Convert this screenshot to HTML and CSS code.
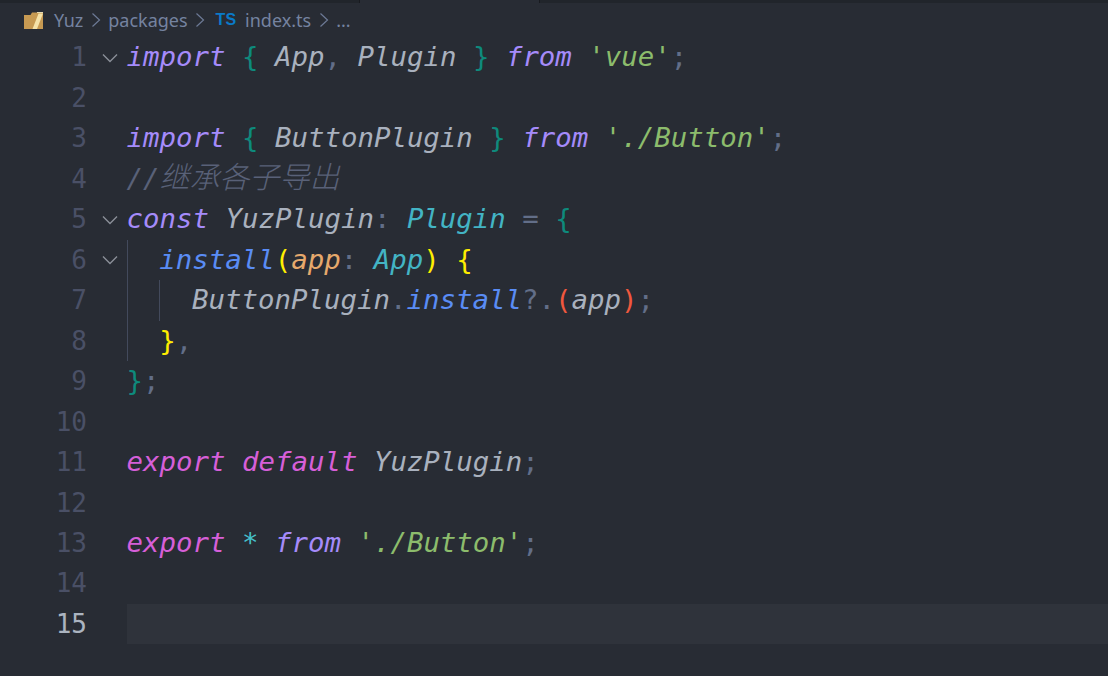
FILE: index.html
```html
<!DOCTYPE html>
<html lang="en">
<head>
<meta charset="utf-8">
<title>index.ts</title>
<link rel="stylesheet" href="styles.css">
</head>
<body>
<div class="tabstrip"><div class="tab-gap"></div><div class="tab-gap tab-active"></div><div class="tab-gap tab-rest"></div></div>
<nav class="crumbs">
  <svg class="folder" width="22" height="20" viewBox="0 0 22 20"><path d="M1 5h6.500L9 2.500h11V19H1z" fill="#c79a52"/><path d="M15.500 3.500H20L14 19H9.500z" fill="#f5e2a8"/><path d="M14 2.500h6" stroke="#e6d9b0" stroke-width="1"/></svg>
  <span class="crumb">Yuz</span>
  <svg class="sep" width="10" height="16" viewBox="0 0 10 16"><path d="M1.500 1.500l7 6.500-7 6.500" fill="none" stroke="#6d7a96" stroke-width="1.200"/></svg>
  <span class="crumb">packages</span>
  <svg class="sep" width="10" height="16" viewBox="0 0 10 16"><path d="M1.500 1.500l7 6.500-7 6.500" fill="none" stroke="#6d7a96" stroke-width="1.200"/></svg>
  <span class="ts">TS</span>
  <span class="crumb">index.ts</span>
  <svg class="sep" width="10" height="16" viewBox="0 0 10 16"><path d="M1.500 1.500l7 6.500-7 6.500" fill="none" stroke="#6d7a96" stroke-width="1.200"/></svg>
  <span class="crumb">...</span>
</nav>
<main class="editor">
  <div class="line"><span class="num">1</span><span class="fold"><svg width="16" height="10" viewBox="0 0 16 10"><path d="M1 1.500l7 7 7-7" fill="none" stroke="#8a8f98" stroke-width="1.400"/></svg></span><code class="code"><i class="kw">import</i> <i class="teal">{</i> <i>App</i><i class="pun">,</i> <i>Plugin</i> <i class="teal">}</i> <i class="kw">from</i> <i class="str">'vue'</i><i class="pun">;</i></code></div>
  <div class="line"><span class="num">2</span><span class="fold"></span><code class="code"></code></div>
  <div class="line"><span class="num">3</span><span class="fold"></span><code class="code"><i class="kw">import</i> <i class="teal">{</i> <i>ButtonPlugin</i> <i class="teal">}</i> <i class="kw">from</i> <i class="str">'./Button'</i><i class="pun">;</i></code></div>
  <div class="line"><span class="num">4</span><span class="fold"></span><code class="code"><i class="cmt">//<span class="cjk">继承各子导出</span></i></code></div>
  <div class="line"><span class="num">5</span><span class="fold"><svg width="16" height="10" viewBox="0 0 16 10"><path d="M1 1.500l7 7 7-7" fill="none" stroke="#8a8f98" stroke-width="1.400"/></svg></span><code class="code"><i class="kw">const</i> <i>YuzPlugin</i><i class="pun">:</i> <i class="type">Plugin</i> <i class="pun">=</i> <i class="teal">{</i></code></div>
  <div class="line"><span class="num">6</span><span class="fold"><svg width="16" height="10" viewBox="0 0 16 10"><path d="M1 1.500l7 7 7-7" fill="none" stroke="#8a8f98" stroke-width="1.400"/></svg></span><span class="guide"></span><code class="code"><i class="fn">install</i><i class="yel">(</i><i class="param">app</i><i class="pun">:</i> <i class="type">App</i><i class="yel">)</i> <i class="yel">{</i></code></div>
  <div class="line"><span class="num">7</span><span class="fold"></span><span class="guide"></span><span class="guide"></span><code class="code"><i>ButtonPlugin</i><i class="pun">.</i><i class="fn">install</i><i class="pun">?.</i><i class="red">(</i><i>app</i><i class="red">)</i><i class="pun">;</i></code></div>
  <div class="line"><span class="num">8</span><span class="fold"></span><span class="guide"></span><code class="code"><i class="yel">}</i><i class="pun">,</i></code></div>
  <div class="line"><span class="num">9</span><span class="fold"></span><code class="code"><i class="teal">}</i><i class="pun">;</i></code></div>
  <div class="line"><span class="num">10</span><span class="fold"></span><code class="code"></code></div>
  <div class="line"><span class="num">11</span><span class="fold"></span><code class="code"><i class="exp">export</i> <i class="exp">default</i> <i>YuzPlugin</i><i class="pun">;</i></code></div>
  <div class="line"><span class="num">12</span><span class="fold"></span><code class="code"></code></div>
  <div class="line"><span class="num">13</span><span class="fold"></span><code class="code"><i class="exp">export</i> <i class="star">*</i> <i class="kw">from</i> <i class="str">'./Button'</i><i class="pun">;</i></code></div>
  <div class="line"><span class="num">14</span><span class="fold"></span><code class="code"></code></div>
  <div class="line current"><span class="num">15</span><span class="fold"></span><code class="code"></code></div>
</main>
</body>
</html>
```
FILE: styles.css
```css
html, body { margin: 0; padding: 0; }
body {
  width: 1108px;
  height: 676px;
  overflow: hidden;
  background: #282c34;
  font-family: "Noto Sans", sans-serif;
}
.tabstrip { display: flex; height: 3px; background: #21252b; }
.tab-gap { width: 360px; border-right: 1px solid #181a1f; box-sizing: border-box; }
.tab-active { width: 180px; background: #282c34; }
.tab-rest { flex: 1; border-right: 0; }

.crumbs {
  display: flex;
  align-items: center;
  height: 34.400px;
  padding-left: 23px;
  color: #7583a0;
  font-size: 18px;
}
.folder { margin-right: 9px; }
.sep { margin: 0 7.500px; }
.ts {
  color: #0a7ac8;
  font-family: "Liberation Sans", sans-serif;
  font-weight: 700;
  font-size: 16px;
  margin: 0 9px 0 3px;
}

.editor {
  font-family: "DejaVu Sans Mono", monospace;
  font-size: 27.400px;
}
.line {
  display: flex;
  align-items: stretch;
  height: 40.470px;
  line-height: 40.470px;
}
.num {
  width: 87px;
  flex: none;
  text-align: right;
  color: #4a5066;
  font-size: 26px;
}
.fold {
  width: 39.500px;
  flex: none;
  box-sizing: border-box;
  padding-left: 15px;
  display: flex;
  align-items: center;
}
.guide {
  width: 32.800px;
  flex: none;
  box-sizing: border-box;
  border-left: 1px solid #434a5c;
}
.code {
  font: inherit;
  white-space: pre;
  color: #a9b1be;
  flex: 1;
}
.code i { font-style: italic; }
.code .pun, .code .teal, .code .yel, .code .red, .code .star { font-style: normal; }
.kw { color: #a58bfa; }
.exp { color: #d65fd8; }
.teal { color: #0e8a7c; }
.pun { color: #626e88; }
.str { color: #8cbc6c; }
.cmt { color: #596178; }
.cjk { font-family: "Noto Sans CJK SC", sans-serif; font-size: 30px; font-weight: 300; line-height: 1; }
.type { color: #43b4c4; }
.fn { color: #5a8cf5; }
.yel { color: #ffee00; }
.param { color: #e6a96c; }
.red { color: #f0583e; }
.star { color: #45c0cc; }
.current .code { background: #2f333b; }
.current .num { color: #abb4c0; }
```
